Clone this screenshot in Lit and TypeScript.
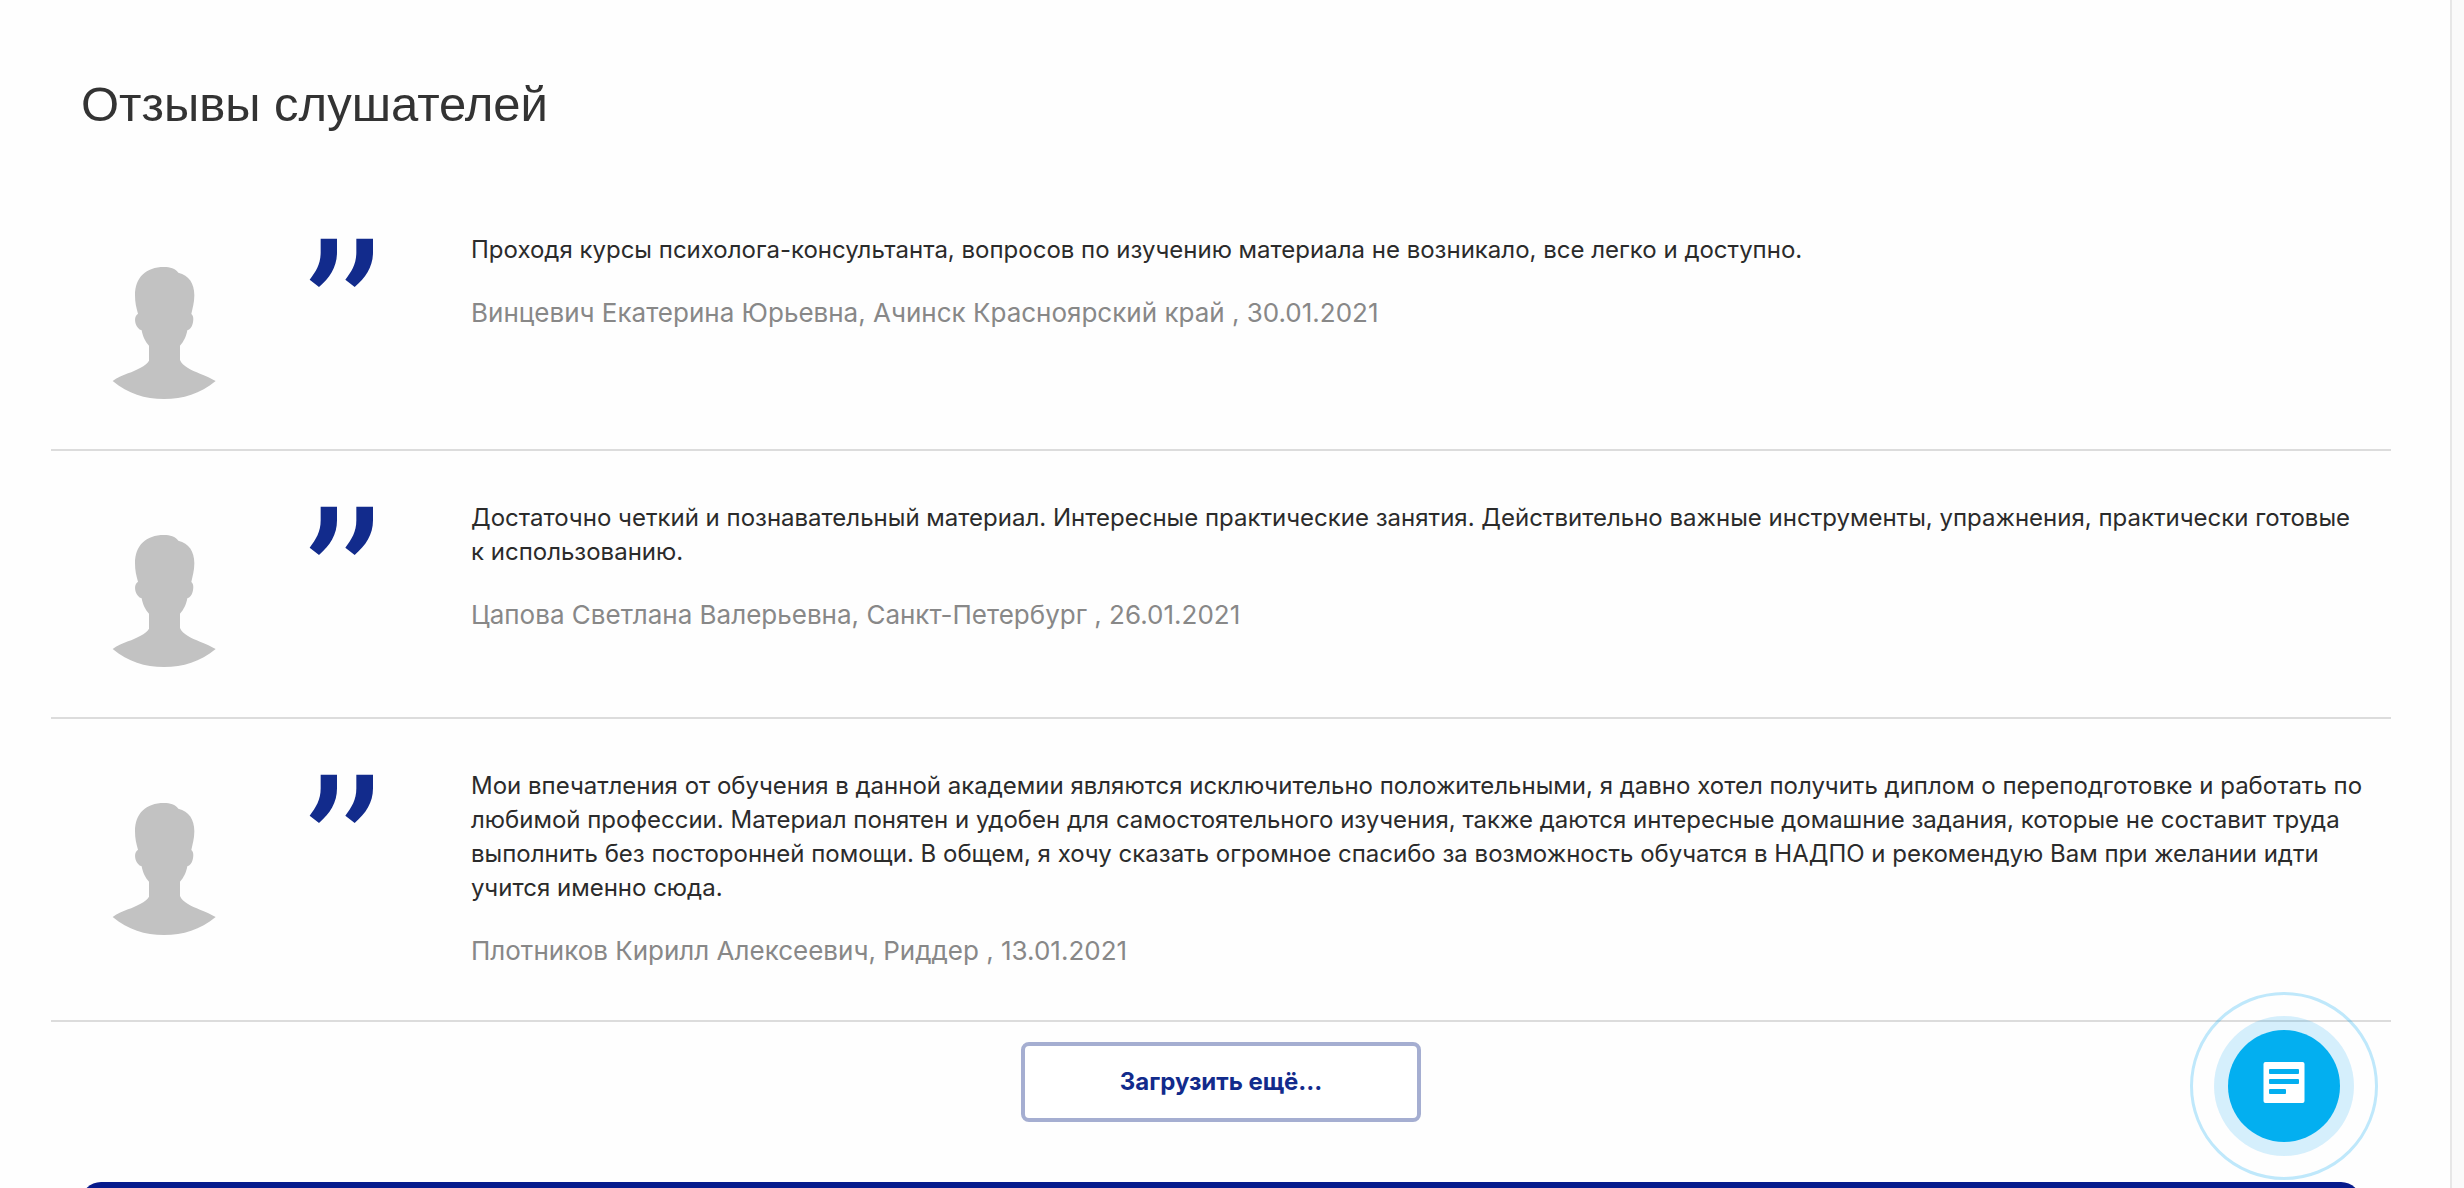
import { LitElement, html, css } from "lit";
import { customElement } from "lit/decorators.js";

interface Review {
  text: string;
  author: string;
}

const REVIEWS: Review[] = [
  {
    text: "Проходя курсы психолога-консультанта, вопросов по изучению материала не возникало, все легко и доступно.",
    author: "Винцевич Екатерина Юрьевна, Ачинск Красноярский край , 30.01.2021",
  },
  {
    text: "Достаточно четкий и познавательный материал. Интересные практические занятия. Действительно важные инструменты, упражнения, практически готовые к использованию.",
    author: "Цапова Светлана Валерьевна, Санкт-Петербург , 26.01.2021",
  },
  {
    text: "Мои впечатления от обучения в данной академии являются исключительно положительными, я давно хотел получить диплом о переподготовке и работать по любимой профессии. Материал понятен и удобен для самостоятельного изучения, также даются интересные домашние задания, которые не составит труда выполнить без посторонней помощи. В общем, я хочу сказать огромное спасибо за возможность обучатся в НАДПО и рекомендую Вам при желании идти учится именно сюда.",
    author: "Плотников Кирилл Алексеевич, Риддер , 13.01.2021",
  },
];

const avatar = html`<svg class="avatar" viewBox="66 138 315 405" aria-hidden="true">
  <path
    d="M222 141C240 141 256 146 265 158C297 166 313 190 313 226C313 248 308 264 304 282C311 287 311 300 308 311C305 322 300 328 292 331C289 348 281 366 270 377V420C277 438 304 451 330 461C348 468 364 475 377 483C330 521 280 537 222 537C164 537 115 521 68 483C80 474 97 467 114 460C140 450 168 438 177 422V377C166 366 158 348 155 331C146 328 140 320 137 311C134 299 134 288 144 281C139 264 135 248 135 226C135 172 168 141 222 141Z"
  />
</svg>`;

const quote = html`<svg class="quote" viewBox="657 54 198 153" aria-hidden="true">
  <path d="M692 56H741V97C741 140 720 173 687 201L659 179C678 154 692 132 692 97Z" />
  <path d="M799 56H849V97C849 140 827 173 794 201L766 179C785 154 799 132 799 97Z" />
</svg>`;

@customElement("review-item")
export class ReviewItem extends LitElement {
  static properties = { review: { attribute: false } };
  declare review: Review;

  static styles = css`
    :host {
      display: grid;
      grid-template-columns: 197px 162px minmax(0, 1fr);
      align-items: start;
      box-sizing: border-box;
      padding: 50px 26px 48px 61px;
      border-bottom: 2px solid #dcdcdc;
    }
    .avatar {
      display: block;
      width: 105px;
      height: 135px;
      margin-top: 33px;
      fill: #c2c2c2;
    }
    .quote {
      display: block;
      width: 66px;
      height: 51px;
      margin-top: 5px;
      fill: #122b8c;
    }
    .body {
      display: flex;
      flex-direction: column;
      gap: 27px;
      margin: 0;
      padding-bottom: 2px;
    }
    .text {
      margin: 0;
      font-size: 24px;
      line-height: 34px;
      color: #2b2b2b;
    }
    .author {
      font-size: 26px;
      line-height: 38px;
      color: #888;
    }
  `;

  render() {
    return html`${avatar}${quote}
      <figure class="body">
        <blockquote class="text">${this.review.text}</blockquote>
        <figcaption class="author">${this.review.author}</figcaption>
      </figure>`;
  }
}

@customElement("chat-button")
export class ChatButton extends LitElement {
  static styles = css`
    :host {
      position: fixed;
      right: 86px;
      bottom: 8px;
      display: grid;
      place-items: center;
      box-sizing: border-box;
      width: 188px;
      height: 188px;
      border: 3px solid rgba(3, 169, 244, 0.25);
      border-radius: 50%;
    }
    .chat {
      display: grid;
      place-items: center;
      width: 112px;
      height: 112px;
      padding: 0;
      border: 0;
      border-radius: 50%;
      background: #03aff0;
      box-shadow: 0 0 0 14px rgba(3, 160, 240, 0.16);
      cursor: pointer;
    }
    .icon {
      display: block;
      width: 42px;
      height: 50px;
    }
  `;

  render() {
    return html`<button class="chat" type="button" aria-label="Чат">
      <svg class="icon" viewBox="0 0 42 50" aria-hidden="true">
        <rect x="0.5" y="1" width="41" height="41" rx="2" fill="#fff" />
        <g fill="#03aff0">
          <rect x="6" y="8" width="30" height="5" rx="1" />
          <rect x="6" y="18" width="30" height="5" rx="1" />
          <rect x="6" y="28" width="17" height="5" rx="1" />
        </g>
      </svg>
    </button>`;
  }
}

@customElement("app-root")
export class AppRoot extends LitElement {
  static styles = css`
    :host {
      display: flex;
      min-height: 100vh;
      background: #fafafa;
      font-family: Inter, "Liberation Sans", sans-serif;
    }
    .page {
      flex: 1;
      display: flex;
      flex-direction: column;
      min-width: 0;
      margin-right: 12px;
      padding: 0 59px 0 51px;
      border-right: 2px solid #e7e7e7;
      background: #fefefe;
    }
    .title {
      margin: 0;
      padding: 76px 30px 51px;
      font-family: "Liberation Sans", Arial, sans-serif;
      font-size: 49px;
      font-weight: 400;
      line-height: 56px;
      color: #333;
    }
    .more {
      align-self: center;
      box-sizing: border-box;
      width: 400px;
      height: 80px;
      margin: 20px 0 60px;
      padding: 0;
      border: 4px solid #a5aed1;
      border-radius: 8px;
      background: #fff;
      font-family: inherit;
      font-size: 24px;
      font-weight: 700;
      line-height: 34px;
      color: #122b8c;
      cursor: pointer;
    }
    .next {
      flex: 1 1 0;
      min-height: 6px;
      margin: 0 30px;
      overflow: hidden;
    }
    .banner {
      height: 200px;
      border-radius: 20px;
      background: #061a8c;
    }
  `;

  render() {
    return html`<main class="page">
        <h2 class="title">Отзывы слушателей</h2>
        ${REVIEWS.map((r) => html`<review-item .review=${r}></review-item>`)}
        <button class="more" type="button">Загрузить ещё...</button>
        <div class="next"><div class="banner"></div></div>
      </main>
      <chat-button></chat-button>`;
  }
}
